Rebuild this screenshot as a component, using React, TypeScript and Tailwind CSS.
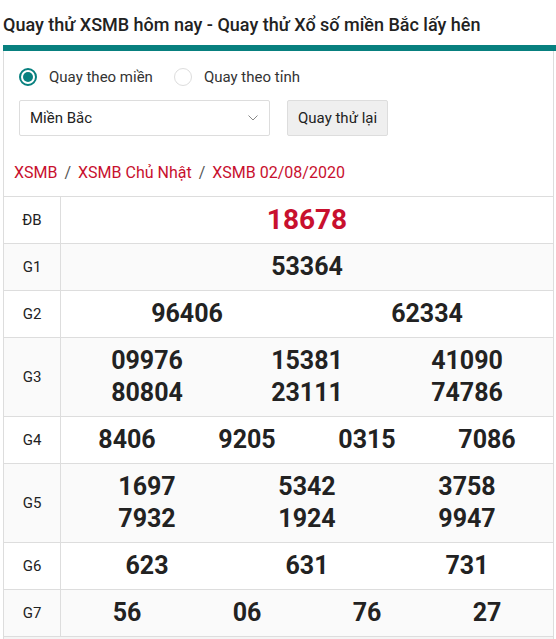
import React from "react";

const rows: { label: string; nums: string[]; cols: number; special?: boolean }[] = [
  { label: "ĐB", nums: ["18678"], cols: 1, special: true },
  { label: "G1", nums: ["53364"], cols: 1 },
  { label: "G2", nums: ["96406", "62334"], cols: 2 },
  { label: "G3", nums: ["09976", "15381", "41090", "80804", "23111", "74786"], cols: 3 },
  { label: "G4", nums: ["8406", "9205", "0315", "7086"], cols: 4 },
  { label: "G5", nums: ["1697", "5342", "3758", "7932", "1924", "9947"], cols: 3 },
  { label: "G6", nums: ["623", "631", "731"], cols: 3 },
  { label: "G7", nums: ["56", "06", "76", "27"], cols: 4 },
];

const gridCls: Record<number, string> = {
  1: "grid grid-cols-1",
  2: "grid grid-cols-2",
  3: "grid grid-cols-3",
  4: "grid grid-cols-4",
};

export default function App() {
  return (
    <div
      className="bg-white text-[#222] min-h-[639px]"
      style={{ fontFamily: "Roboto, 'Liberation Sans', sans-serif" }}
    >
      <h1 className="h-[45px] pt-[13px] pl-[3px] text-[18px] leading-[24px] font-medium text-[#222] whitespace-nowrap">
        Quay thử XSMB hôm nay - Quay thử Xổ số miền Bắc lấy hên
      </h1>
      <div className="ml-[3px] h-[6px] bg-[#08807f]" />
      <div className="ml-[3px] w-[551px] border-x border-[#ddd]">
        <div className="pt-[13px] pl-[15px]">
          <div className="flex items-center h-[26px] text-[15px]">
            <span className="w-[18px] h-[18px] rounded-full border-2 border-[#08807f] flex items-center justify-center">
              <span className="w-[10px] h-[10px] rounded-full bg-[#08807f]" />
            </span>
            <span className="ml-[12px] text-[#333]">Quay theo miền</span>
            <span className="ml-[21px] w-[18px] h-[18px] rounded-full border border-[#ddd]" />
            <span className="ml-[12px] text-[#333]">Quay theo tỉnh</span>
          </div>
          <div className="flex mt-[10px] gap-[17px]">
            <div className="w-[251px] h-[36px] border border-[#ddd] rounded-[2px] flex items-center justify-between pl-[10px] pr-[11px] text-[15px] text-[#222]">
              <span>Miền Bắc</span>
              <svg width="10" height="6" viewBox="0 0 10 6" fill="none">
                <path d="M0.5 0.5 L5 5 L9.5 0.5" stroke="#888" strokeWidth="1" />
              </svg>
            </div>
            <div className="h-[36px] px-[10px] border border-[#ddd] rounded-[2px] bg-[#efefef] flex items-center text-[15px] text-[#222]">
              Quay thử lại
            </div>
          </div>
        </div>
        <div className="pt-[25px] pb-[11px] pl-[10px] text-[16px] leading-[24px] flex items-center">
          <span className="text-[#c8102e]">XSMB</span>
          <span className="px-[7px] text-[#555]">/</span>
          <span className="text-[#c8102e]">XSMB Chủ Nhật</span>
          <span className="px-[7px] text-[#555]">/</span>
          <span className="text-[#c8102e]">XSMB 02/08/2020</span>
        </div>
        <div className="border-t border-[#ddd]">
          {rows.map((r, i) => (
            <div
              key={r.label}
              className={`flex border-b border-[#ddd] ${i % 2 === 1 ? "bg-[#fafafa]" : "bg-white"}`}
            >
              <div className="w-[57px] shrink-0 border-r border-[#ddd] flex items-center justify-center text-[15px] text-[#222]">
                {r.label}
              </div>
              <div className="flex-1 py-[7px] px-[6px]">
                <div className={gridCls[r.cols]}>
                  {r.nums.map((n, j) => (
                    <div
                      key={j}
                      className={`text-center font-bold leading-[32px] ${
                        r.special ? "text-[28px] text-[#c8102e]" : "text-[25px] text-[#222]"
                      }`}
                    >
                      {n}
                    </div>
                  ))}
                </div>
              </div>
            </div>
          ))}
          <div className="h-[20px] bg-[#f4f4f4]" />
        </div>
      </div>
    </div>
  );
}
